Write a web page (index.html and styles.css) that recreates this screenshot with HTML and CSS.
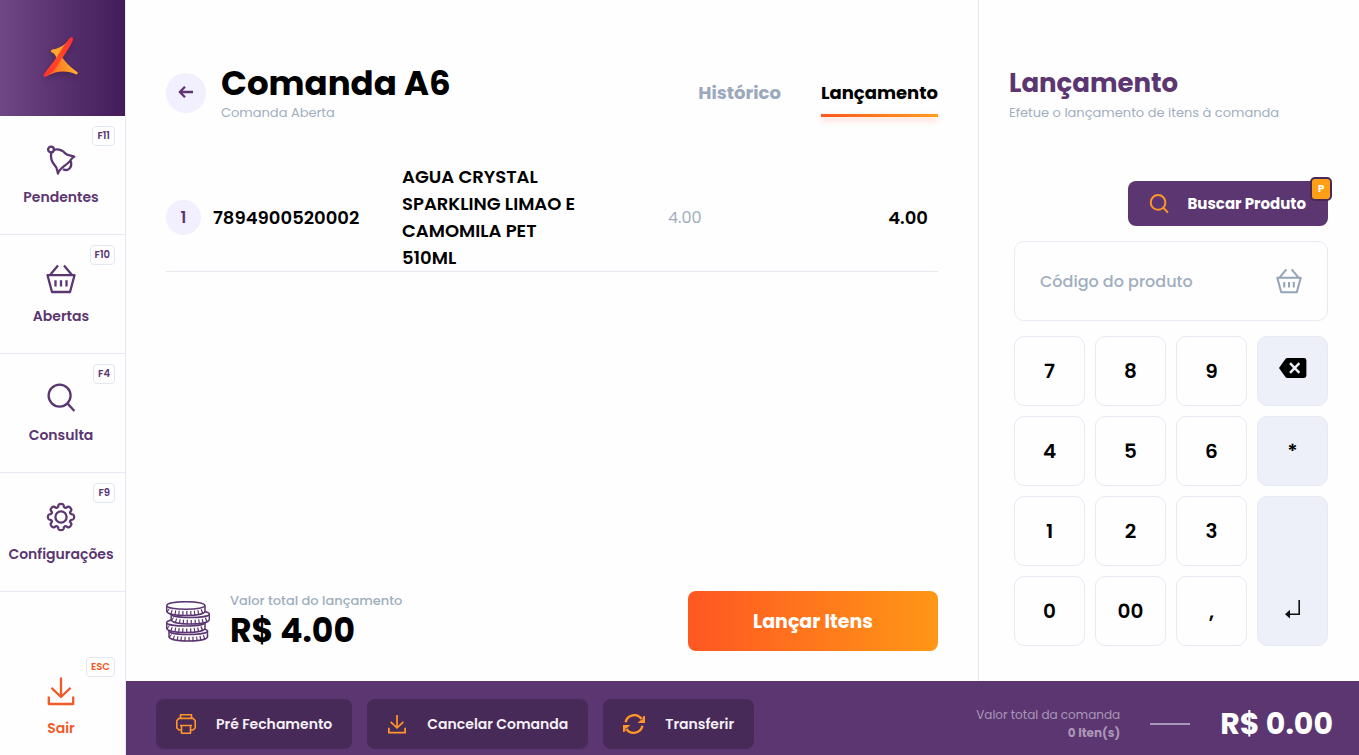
FILE: index.html
```html
<!DOCTYPE html>
<html lang="pt-BR">
<head>
  <meta charset="UTF-8">
  <meta name="viewport" content="width=device-width, initial-scale=1.0">
  <title>Comanda A6</title>
  <link rel="stylesheet" href="styles.css">
</head>
<body>
  <svg class="sprite" aria-hidden="true">
    <symbol id="bell" viewBox="0 0 30 30">
      <circle cx="5" cy="4.5" r="2.9"/>
      <path d="M7.8 4.8C13 3.6 17 6 19.5 8.6C21.5 10.6 25 10.4 28.3 11.7C24.5 13.4 25.5 15 22 18C17.5 22 12.6 24.5 12 28.6C10.8 25.6 11.8 23.4 9 20.6C5.4 17 4.4 12 5.3 7.6"/>
      <path d="M24.8 16C26.6 22.4 22 26.8 17 24.2"/>
    </symbol>
    <symbol id="basket" viewBox="0 0 30 30">
      <path d="M12 1.5L4 11M18 1.5L26 11M1.5 11.2H28.5L24 28H6ZM9.5 16.2V22.5M15 16.2V22.5M20.5 16.2V22.5"/>
    </symbol>
    <symbol id="search" viewBox="0 0 30 30">
      <circle cx="13.6" cy="12.6" r="11"/>
      <path d="M21.4 20.4L28.4 28"/>
    </symbol>
    <symbol id="gear" viewBox="-15 -15 30 30">
      <circle cx="0" cy="0" r="5.6"/>
      <path d="M10.2 -2.9L12 -2.5Q13.1 -2.2 13.1 0Q13.1 2.2 12 2.5L10.2 2.9Q8.6 3.8 9.3 5.2L10.2 6.7Q10.8 7.7 9.3 9.3Q7.7 10.8 6.7 10.2L5.2 9.3Q3.8 8.6 2.9 10.2L2.5 12Q2.2 13.1 0 13.1Q-2.2 13.1 -2.5 12L-2.9 10.2Q-3.8 8.6 -5.2 9.3L-6.7 10.2Q-7.7 10.8 -9.3 9.3Q-10.8 7.7 -10.2 6.7L-9.3 5.2Q-8.6 3.8 -10.2 2.9L-12 2.5Q-13.1 2.2 -13.1 0Q-13.1 -2.2 -12 -2.5L-10.2 -2.9Q-8.6 -3.8 -9.3 -5.2L-10.2 -6.7Q-10.8 -7.7 -9.3 -9.3Q-7.7 -10.8 -6.7 -10.2L-5.2 -9.3Q-3.8 -8.6 -2.9 -10.2L-2.5 -12Q-2.2 -13.1 0 -13.1Q2.2 -13.1 2.5 -12L2.9 -10.2Q3.8 -8.6 5.2 -9.3L6.7 -10.2Q7.7 -10.8 9.3 -9.3Q10.8 -7.7 10.2 -6.7L9.3 -5.2Q8.6 -3.8 10.2 -2.9Z"/>
    </symbol>
    <symbol id="download" viewBox="0 0 30 30">
      <path d="M15 1.5V21M5.5 11.8L15 21L24.5 11.8M2.8 20.5V28H27.2V20.5"/>
    </symbol>
  </svg>

  <nav class="sidebar">
    <div class="logo">
      <svg width="38" height="44" viewBox="0 0 38 44">
        <defs>
          <linearGradient id="logoRed" x1="0" y1="1" x2="1" y2="0">
            <stop offset="0" stop-color="#ff2f2f"/>
            <stop offset="0.5" stop-color="#ff4b25"/>
            <stop offset="1" stop-color="#ff2f2f"/>
          </linearGradient>
          <linearGradient id="logoGold">
            <stop offset="0" stop-color="#ff5a22"/>
            <stop offset="1" stop-color="#ffb62c"/>
          </linearGradient>
        </defs>
        <path d="M9.6 13.8C16 13 22 9.5 27 4.5L18 20L14.5 22C13.5 19 12 17 9.5 16.2Q8.2 14.6 9.6 13.8Z" fill="#ffa928"/>
        <path d="M18.5 18.5C22 25 28 31 35.2 36Q36.6 37.4 34.6 38.6C25 33.8 14 34.5 3.5 40.8L13 27Z" fill="url(#logoGold)"/>
        <path d="M27.8 2Q31.6 -0.4 30.8 4.5C27 13 20 22 17 27.5C13.6 33.5 9 37.5 4 40.6Q0.4 41.4 2.2 37.8C6 32.5 11 27 15 20.5C19 14 23 8 27.8 2Z" fill="url(#logoRed)"/>
      </svg>
    </div>
    <a class="nav-item" href="#">
      <kbd class="key">F11</kbd>
      <svg class="icon"><use href="#bell"/></svg>
      <span>Pendentes</span>
    </a>
    <a class="nav-item" href="#">
      <kbd class="key">F10</kbd>
      <svg class="icon"><use href="#basket"/></svg>
      <span>Abertas</span>
    </a>
    <a class="nav-item" href="#">
      <kbd class="key">F4</kbd>
      <svg class="icon"><use href="#search"/></svg>
      <span>Consulta</span>
    </a>
    <a class="nav-item" href="#">
      <kbd class="key">F9</kbd>
      <svg class="icon"><use href="#gear"/></svg>
      <span>Configurações</span>
    </a>
    <a class="nav-item exit" href="#">
      <kbd class="key">ESC</kbd>
      <svg class="icon"><use href="#download"/></svg>
      <span>Sair</span>
    </a>
  </nav>

  <div class="page">
    <main class="order">
      <header class="order-header">
        <button class="back" aria-label="Voltar">
          <svg class="icon" width="16" height="14" viewBox="0 0 16 14"><path d="M15 6H2M7 0.8L1.8 6L7 11.2"/></svg>
        </button>
        <div class="heading">
          <h1>Comanda A6</h1>
          <p>Comanda Aberta</p>
        </div>
        <div class="tabs">
          <a class="tab" href="#">Histórico</a>
          <a class="tab active" href="#">Lançamento</a>
        </div>
      </header>

      <table class="items">
        <tr>
          <td class="qty"><span>1</span></td>
          <td class="code">7894900520002</td>
          <td class="name">AGUA CRYSTAL SPARKLING LIMAO E CAMOMILA PET 510ML</td>
          <td class="price">4.00</td>
          <td class="total">4.00</td>
        </tr>
      </table>

      <div class="summary">
        <svg class="coins" width="44" height="41" viewBox="0 0 44 41">
          <g>
            <path d="M3 29V35.5C3 41.5 41.5 41.5 41.5 35.5V29"/>
            <ellipse cx="22.2" cy="30" rx="19.2" ry="3.6"/>
            <path class="ridges" d="M4 34.5C9 39.3 36 39.3 41 34.5"/>
          </g>
          <g>
            <path d="M0.7 21V27C0.7 33 39 33 39 27V21"/>
            <ellipse cx="19.8" cy="21.5" rx="19.1" ry="3.6"/>
            <path class="ridges" d="M1.7 26C7 30.8 33 30.8 38 26"/>
          </g>
          <g>
            <path d="M5.2 12.5V18.5C5.2 24.5 43.3 24.5 43.3 18.5V12.5"/>
            <ellipse cx="24.2" cy="13" rx="19.1" ry="3.6"/>
            <path class="ridges" d="M6.2 17.5C11 22.3 38 22.3 42.3 17.5"/>
          </g>
          <g>
            <path d="M0.7 4.5V10C0.7 16 39 16 39 10V4.5"/>
            <ellipse cx="19.8" cy="4.5" rx="19.1" ry="3.8"/>
            <path class="ridges" d="M1.7 9C7 13.4 33 13.4 38 9"/>
          </g>
        </svg>
        <div class="summary-text">
          <p>Valor total do lançamento</p>
          <strong>R$ 4.00</strong>
        </div>
        <button class="submit">Lançar Itens</button>
      </div>
    </main>

    <aside class="entry">
      <h2>Lançamento</h2>
      <p>Efetue o lançamento de itens à comanda</p>

      <div class="entry-form">
        <button class="find">
          <svg class="icon small"><use href="#search"/></svg>
          Buscar Produto
          <kbd>P</kbd>
        </button>
        <div class="field">
          <input type="text" placeholder="Código do produto" aria-label="Código do produto">
          <svg class="icon"><use href="#basket"/></svg>
        </div>
        <div class="keypad">
          <button>7</button>
          <button>8</button>
          <button>9</button>
          <button class="alt" aria-label="Apagar">
            <svg class="erase" width="28" height="20" viewBox="0 0 28 20">
              <path d="M0 10L6.4 1Q7.2 0 8.4 0H25Q27.4 0 27.4 2.4V17.6Q27.4 20 25 20H8.4Q7.2 20 6.4 19Z"/>
              <path class="cross" d="M11 5.2L20.4 14.8M20.4 5.2L11 14.8"/>
            </svg>
          </button>
          <button>4</button>
          <button>5</button>
          <button>6</button>
          <button class="alt">*</button>
          <button>1</button>
          <button>2</button>
          <button>3</button>
          <button class="alt enter" aria-label="Enter">
            <svg width="16" height="20" viewBox="0 0 16 20">
              <path d="M14.2 0V14.2H4" fill="none" stroke="#111" stroke-width="1.6"/>
              <path d="M0 14.2L5 9.8V18.6Z" fill="#111"/>
            </svg>
          </button>
          <button>0</button>
          <button>00</button>
          <button>,</button>
        </div>
      </div>
    </aside>

    <footer class="bar">
      <button class="action">
        <svg class="icon small" viewBox="0 0 20 20"><path d="M4.5 4V0.8H15.5V4M5 16H3L0.8 14V6.5L3 4.4H17L19.2 6.5V14L17 16H15M5.5 11.5H14.5V19.2H5.5ZM4 11.5H16"/></svg>
        Pré Fechamento
      </button>
      <button class="action">
        <svg class="icon small"><use href="#download"/></svg>
        Cancelar Comanda
      </button>
      <button class="action">
        <svg class="refresh" width="22" height="20" viewBox="0 0 22 20">
          <path d="M2.6 8.2A8.8 8.8 0 0 1 18.6 5.2M19.4 11.8A8.8 8.8 0 0 1 3.4 14.8"/>
          <path class="head" d="M22 2V9H14.6L17 6.8L19.6 5.4V2.4ZM0 18V11H7.4L5 13.2L2.4 14.6V17.6Z"/>
        </svg>
        Transferir
      </button>
      <div class="bar-total">
        <p>Valor total da comanda<br><b>0 Iten(s)</b></p>
        <span class="dash"></span>
        <strong>R$ 0.00</strong>
      </div>
    </footer>
  </div>
</body>
</html>
```
FILE: styles.css
```css
* {
  box-sizing: border-box;
}
body {
  margin: 0;
  min-height: 100vh;
  display: flex;
  font-family: 'Poppins', 'Inter', sans-serif;
  background: #fefefe;
  color: #000;
}
h1, h2, p {
  margin: 0;
}
a {
  color: inherit;
  text-decoration: none;
}
button, input, kbd {
  font-family: inherit;
}
button {
  border: none;
  padding: 0;
  cursor: pointer;
}
.sprite {
  display: none;
}
.icon {
  width: 30px;
  height: 30px;
  fill: none;
  stroke: currentColor;
  stroke-width: 2.3;
  stroke-linejoin: round;
}
.icon.small {
  width: 20px;
  height: 20px;
}

/* sidebar */
.sidebar {
  flex: none;
  width: 126px;
  border-right: 1px solid #e6e8f4;
  display: flex;
  flex-direction: column;
  color: #5b3671;
}
.logo {
  height: 116px;
  padding-right: 3px;
  background: linear-gradient(90deg, #6e4784, #421b59);
  display: flex;
  justify-content: center;
  align-items: center;
}
.logo svg {
  filter: drop-shadow(0 3px 3px rgba(0, 0, 0, 0.2));
}
.nav-item {
  position: relative;
  display: flex;
  flex-direction: column;
  align-items: center;
  gap: 10px;
  padding: 29px 3px 25px 0;
  border-bottom: 1px solid #e6e8f4;
  font-size: 14px;
  line-height: 24px;
  font-weight: 600;
}
.nav-item.exit {
  margin-top: auto;
  padding-bottom: 15px;
  border-bottom: none;
  color: #f15a29;
}
.key {
  position: absolute;
  top: 10px;
  right: 10px;
  padding: 0 4px;
  border: 1px solid #e2e8f0;
  border-radius: 4px;
  font-size: 10px;
  line-height: 18px;
  font-weight: 600;
}

/* page */
.page {
  flex: 1;
  display: grid;
  grid-template-columns: 1fr 380px;
  grid-template-rows: 1fr auto;
}
.order {
  display: flex;
  flex-direction: column;
  padding: 63px 40px 30px;
  border-right: 1px solid #e6e8f4;
}
.order-header {
  display: flex;
  align-items: center;
}
.back {
  width: 40px;
  height: 40px;
  border-radius: 50%;
  background: #f2effe;
  color: #5b3671;
  display: flex;
  justify-content: center;
  align-items: center;
}
.back .icon {
  width: 16px;
  height: 14px;
}
.heading {
  margin-left: 15px;
}
.heading h1 {
  font-size: 34px;
  line-height: 40px;
}
.heading p, .entry > p {
  font-size: 13px;
  line-height: 20px;
  color: #a0aec0;
}
.tabs {
  margin-left: auto;
  display: flex;
  gap: 40px;
}
.tab {
  padding-top: 10px;
  font-size: 18px;
  line-height: 28px;
  font-weight: 700;
  color: #9ba8bd;
}
.tab::after {
  content: '';
  display: block;
  height: 3px;
  margin-top: 7px;
}
.tab.active {
  color: #000;
}
.tab.active::after {
  background: linear-gradient(90deg, #ff5722, #ff9c1a);
  box-shadow: 0 3px 6px rgba(255, 87, 34, 0.3);
}
.items {
  margin-top: 40px;
  width: 100%;
  table-layout: fixed;
  border-collapse: collapse;
  border-bottom: 1px solid #e6e8f0;
  font-size: 18px;
  line-height: 27px;
  font-weight: 600;
}
.items td {
  padding: 0;
}
.items .qty {
  width: 47px;
}
.qty span {
  display: block;
  width: 35px;
  border-radius: 50%;
  background: #f2effe;
  color: #5b3671;
  font-size: 16px;
  line-height: 35px;
  text-align: center;
}
.items .code {
  width: 189px;
}
.items .name {
  width: 185px;
}
.items .price {
  padding-left: 81px;
  font-size: 16px;
  font-weight: 400;
  color: #a0aec0;
}
.items .total {
  padding-right: 10px;
  text-align: right;
}
.summary {
  margin-top: auto;
  display: flex;
  align-items: center;
}
.coins {
  fill: #fefefe;
  stroke: #5b3671;
  stroke-width: 1.5;
}
.coins .ridges {
  fill: none;
  stroke-width: 4.4;
  stroke-dasharray: 1.2 2.6;
}
.summary-text {
  margin-left: 20px;
}
.summary-text p {
  font-size: 13px;
  line-height: 20px;
  font-weight: 500;
  color: #a0aec0;
}
.summary-text strong, .bar-total strong {
  display: block;
  font-size: 33px;
  line-height: 40px;
}
.submit {
  margin-left: auto;
  width: 250px;
  height: 60px;
  border-radius: 8px;
  background: linear-gradient(90deg, #ff5722, #ff9716);
  color: #fff;
  font-size: 19px;
  font-weight: 700;
}

/* product entry */
.entry {
  padding: 63px 31px 35px 30px;
}
.entry h2 {
  font-size: 26px;
  line-height: 40px;
  color: #5b3671;
}
.entry-form {
  margin: 58px 0 0 5px;
  display: flex;
  flex-direction: column;
  gap: 15px;
}
.find {
  position: relative;
  align-self: flex-end;
  width: 200px;
  height: 45px;
  padding: 0 22px 0 21px;
  display: flex;
  justify-content: space-between;
  align-items: center;
  border-radius: 8px;
  background: #5b3671;
  color: #fff;
  font-size: 15px;
  font-weight: 700;
}
.find .icon {
  color: #ff9627;
  stroke-width: 3;
}
.find kbd {
  position: absolute;
  top: -4px;
  right: -4px;
  width: 22px;
  border: 2px solid #482a59;
  border-radius: 5px;
  background: #ff9f16;
  font-size: 10px;
  line-height: 20px;
}
.field {
  display: flex;
  align-items: center;
  height: 80px;
  padding: 0 25px;
  border: 1px solid #e6eaf4;
  border-radius: 10px;
}
.field input {
  flex: 1;
  min-width: 0;
  padding: 0;
  border: none;
  outline: none;
  background: none;
  font-size: 16px;
  font-weight: 500;
}
.field input::placeholder {
  color: #a0aec0;
}
.field .icon {
  width: 26px;
  height: 26px;
  color: #94a3b8;
}
.keypad {
  display: grid;
  grid-template-columns: repeat(4, 1fr);
  grid-auto-rows: 70px;
  gap: 10px;
}
.keypad button {
  border: 1px solid #e6eaf4;
  border-radius: 10px;
  background: #fefefe;
  font-size: 20px;
  font-weight: 600;
  color: #000;
}
.keypad .alt {
  background: #edf0f9;
}
.keypad .enter {
  grid-row: span 2;
  display: flex;
  justify-content: center;
  align-items: flex-end;
  padding-bottom: 25px;
}
.erase .cross {
  fill: none;
  stroke: #edf0f9;
  stroke-width: 2.4;
}

/* bottom bar */
.bar {
  grid-column: 1 / -1;
  display: flex;
  align-items: center;
  gap: 15px;
  padding: 18px 26px 6px 30px;
  background: #5b3671;
  color: #fff;
}
.action {
  height: 50px;
  padding: 0 20px;
  display: flex;
  align-items: center;
  gap: 20px;
  border-radius: 8px;
  background: #482a59;
  color: #f4f0f6;
  font-size: 14px;
  font-weight: 600;
}
.action .icon {
  color: #ff9627;
  stroke-width: 1.6;
}
.action use {
  stroke-width: 2.6;
}
.refresh {
  fill: none;
  stroke: #ff9627;
  stroke-width: 2.4;
}
.refresh .head {
  fill: #ff9627;
  stroke: none;
}
.bar-total {
  margin-left: auto;
  display: flex;
  align-items: center;
  gap: 30px;
}
.bar-total p {
  text-align: right;
  font-size: 12px;
  line-height: 18px;
  color: #ab97b7;
}
.bar-total strong {
  font-size: 30px;
}
.dash {
  width: 40px;
  height: 2px;
  background: #ab97b7;
}
```
